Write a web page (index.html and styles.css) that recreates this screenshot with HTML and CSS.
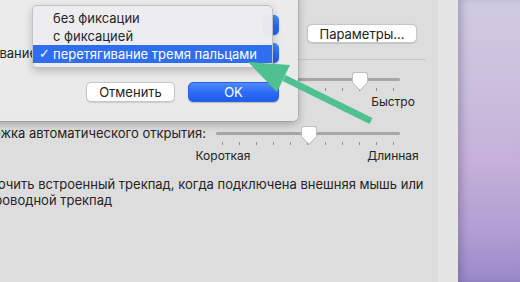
FILE: index.html
```html
<!DOCTYPE html>
<html lang="ru">
<head>
<meta charset="utf-8">
<title>Параметры трекпада</title>
<link rel="stylesheet" href="styles.css">
</head>
<body>
<div class="screen">
  <div class="window">
    <div class="content">
      <div class="top-row">
        <button class="btn btn-white params">Параметры…</button>
      </div>
      <div class="separator"></div>

      <div class="row slider-row first">
        <div class="label"><span>Скорость перетягивания:</span></div>
        <div class="slider">
          <div class="track"></div>
          <div class="ticks">
            <i class="tick"></i><i class="tick"></i><i class="tick"></i><i class="tick"></i><i class="tick"></i><i class="tick"></i><i class="tick"></i><i class="tick"></i><i class="tick"></i><i class="tick"></i><i class="tick"></i>
          </div>
          <svg class="thumb" style="left:136px" width="16" height="19" viewBox="0 0 16 19"><path d="M3 0.5 H13 Q15.5 0.5 15.5 3 V10.5 L8 18.3 L0.5 10.5 V3 Q0.5 0.5 3 0.5 Z" fill="#ffffff" stroke="#b9b9b9" stroke-width="0.8"/></svg>
          <div class="scale">
            <span class="scale-label"><span>Медленно</span></span>
            <span class="scale-label"><span>Быстро</span></span>
          </div>
        </div>
      </div>

      <div class="row slider-row second">
        <div class="label"><span>Задержка автоматического открытия:</span></div>
        <div class="slider">
          <div class="track"></div>
          <div class="ticks">
            <i class="tick"></i><i class="tick"></i><i class="tick"></i><i class="tick"></i><i class="tick"></i><i class="tick"></i><i class="tick"></i><i class="tick"></i><i class="tick"></i><i class="tick"></i><i class="tick"></i>
          </div>
          <svg class="thumb" style="left:85px" width="16" height="19" viewBox="0 0 16 19"><path d="M3 0.5 H13 Q15.5 0.5 15.5 3 V10.5 L8 18.3 L0.5 10.5 V3 Q0.5 0.5 3 0.5 Z" fill="#ffffff" stroke="#b9b9b9" stroke-width="0.8"/></svg>
          <div class="scale">
            <span class="scale-label"><span>Короткая</span></span>
            <span class="scale-label"><span>Длинная</span></span>
          </div>
        </div>
      </div>

      <div class="check-row">
        <p class="check-text">Отключить встроенный трекпад, когда подключена внешняя мышь или<br>беспроводной трекпад</p>
      </div>
    </div>

    <div class="sheet">
      <div class="sheet-row">
        <div class="popup"><span class="popup-arrows"></span></div>
      </div>
      <div class="sheet-row">
        <span class="sheet-label">Включить перетягивание</span>
        <div class="popup"><span class="popup-arrows"></span></div>
      </div>
      <div class="sheet-buttons">
        <button class="btn btn-white cancel">Отменить</button>
        <button class="btn btn-blue ok">OK</button>
      </div>
    </div>
  </div>
  <div class="strip"></div>
  <div class="desktop"></div>

  <div class="menu">
    <div class="menu-item">без фиксации</div>
    <div class="menu-item">с фиксацией</div>
    <div class="menu-item selected"><span class="check">✓</span>перетягивание тремя пальцами</div>
  </div>

  <svg class="arrow" width="520" height="282" viewBox="0 0 520 282">
    <line x1="284" y1="78" x2="371" y2="121" stroke="#4fc08f" stroke-width="6.5"/>
    <polygon points="248,62 290,65 277,92" fill="#4fc08f"/>
  </svg>
</div>
</body>
</html>
```

FILE: styles.css
```css
* { box-sizing: border-box; }
html, body { margin: 0; padding: 0; }
body {
  font-family: Inter, "Liberation Sans", "Noto Sans", Arial, sans-serif;
  font-size: 13px;
  color: #242424;
  background: #dcdcdc;
}
.screen {
  position: relative;
  display: flex;
  width: 520px;
  height: 282px;
  overflow: hidden;
}
.window {
  position: relative;
  width: 438px;
  flex-shrink: 0;
  background: #dddddd;
  overflow: hidden;
}
.strip {
  width: 20px;
  flex-shrink: 0;
  background: #e5e5e5;
}
.desktop {
  flex: 1;
  background: linear-gradient(180deg, #cfcce0 0%, #cbbfdd 30%, #c6b2d9 55%, #b4a0d3 80%, #9a89ca 100%);
  box-shadow: inset 6px 0 8px -3px rgba(70, 60, 100, 0.35);
}

/* content of the preferences window */
.content {
  padding-top: 24px;
}
.top-row {
  display: flex;
  justify-content: flex-end;
  padding-right: 21px;
}
.btn {
  font-family: inherit;
  font-size: 13px;
  color: #222;
  height: 20px;
  border-radius: 5px;
  padding: 0;
  line-height: 18px;
}
.btn-white {
  background: #ffffff;
  border: 1px solid #c6c6c6;
  box-shadow: 0 0.5px 1px rgba(0,0,0,0.12);
}
.btn-blue {
  color: #ffffff;
  border: 1px solid #2a62e0;
  background: linear-gradient(180deg, #4c8bf8 0%, #2a6af3 55%, #1f5eee 100%);
  box-shadow: 0 0.5px 1px rgba(0,0,0,0.2);
}
.params {
  width: 110px;
  height: 19px;
}
.separator {
  height: 1px;
  background: #c8c8c8;
  margin: 16px 12px 0 0;
}

.row {
  display: flex;
  align-items: flex-start;
  gap: 10px;
}
.slider-row.first { margin-top: 12px; }
.slider-row.second { margin-top: 17px; }
.label {
  width: 206px;
  flex-shrink: 0;
  display: flex;
  justify-content: flex-end;
  white-space: nowrap;
  line-height: 16px;
  margin-top: -1px;
}

.slider {
  position: relative;
  width: 184px;
  padding-top: 6px;
}
.track {
  height: 3px;
  background: #a6a6a6;
  border-radius: 2px;
}
.ticks {
  display: flex;
  justify-content: space-between;
  padding: 7px 6px 0 6px;
}
.tick {
  display: block;
  width: 1px;
  height: 3px;
  background: #8f8f8f;
}
.thumb {
  position: absolute;
  top: 0;
  filter: drop-shadow(0 0.5px 0.6px rgba(0,0,0,0.25));
}
.scale {
  display: flex;
  justify-content: space-between;
  padding: 0 6.5px;
  margin-top: 4px;
  font-size: 12px;
  line-height: 14px;
}
.scale-label {
  width: 1px;
  display: flex;
  justify-content: center;
  white-space: nowrap;
}

.check-row {
  margin-top: 13px;
  margin-left: -36px;
}
.check-text {
  margin: 0;
  line-height: 16px;
  white-space: nowrap;
}

/* sheet */
.sheet {
  position: absolute;
  top: -10px;
  left: -120px;
  width: 418px;
  padding: 25px 19px 19px 0;
  background: linear-gradient(180deg, #ececec 0%, #e9e9e9 100%);
  border-radius: 0 0 5px 5px;
  box-shadow: 0 3px 10px rgba(0,0,0,0.28), 0 0 0 0.5px rgba(0,0,0,0.18);
  display: flex;
  flex-direction: column;
  align-items: flex-end;
}
.sheet-row {
  display: flex;
  align-items: center;
  gap: 6px;
  height: 20px;
  margin-bottom: 8px;
}
.sheet-label {
  white-space: nowrap;
}
.popup {
  width: 236px;
  height: 20px;
  background: #ffffff;
  border-radius: 5px;
  display: flex;
  justify-content: flex-end;
  box-shadow: 0 0.5px 1px rgba(0,0,0,0.2);
}
.popup-arrows {
  width: 16px;
  height: 20px;
  border-radius: 0 5px 5px 0;
  background: linear-gradient(180deg, #4c8bf8 0%, #2a6af3 55%, #1f5eee 100%);
}
.sheet-buttons {
  display: flex;
  gap: 13px;
  margin-top: 11px;
}
.cancel { width: 89px; }
.ok { width: 91px; }

/* open pop-up menu */
.menu {
  position: absolute;
  left: 32px;
  top: 5px;
  width: 241px;
  height: 63px;
  padding-top: 3px;
  background: rgba(236, 236, 238, 0.97);
  border: 1px solid #c2c2c4;
  border-radius: 5px;
  box-shadow: 0 3px 9px rgba(0,0,0,0.22);
}
.menu-item {
  position: relative;
  height: 18px;
  line-height: 18px;
  padding-left: 20px;
  white-space: nowrap;
  color: #262626;
}
.menu-item.selected {
  background: #2f6fef;
  color: #ffffff;
}
.check {
  position: absolute;
  left: 6px;
  top: 0;
  font-size: 13px;
  font-family: "DejaVu Sans", sans-serif;
}

.arrow {
  position: absolute;
  left: 0;
  top: 0;
  pointer-events: none;
}
```
